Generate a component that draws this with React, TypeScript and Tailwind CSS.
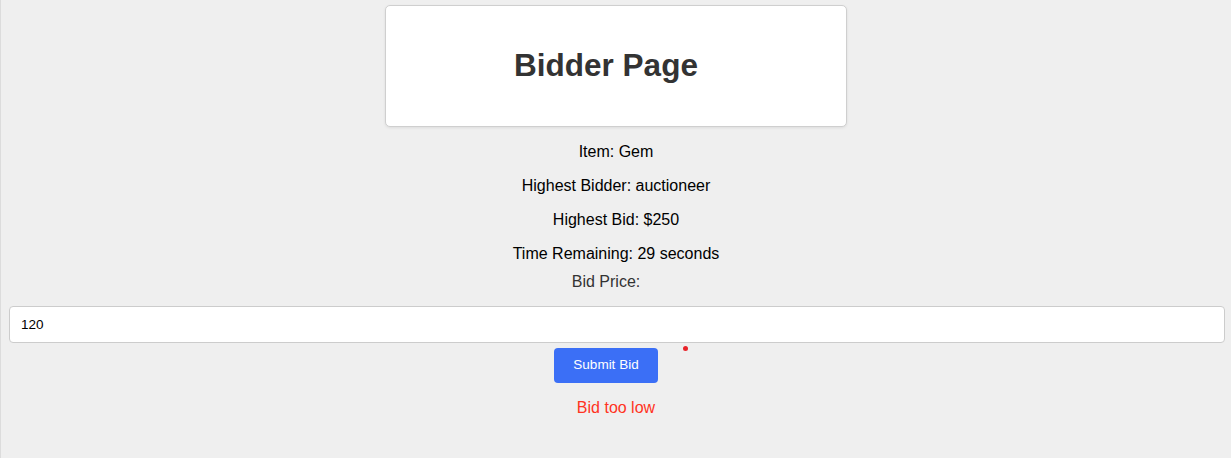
const App = () => {
  return (
    <div
      className="min-h-[458px] bg-[#efefef] border-l border-[#dcdcdc] pt-[5px] px-2 text-center"
      style={{ fontFamily: '"Liberation Sans", Arial, sans-serif' }}
    >
      {/* Header card */}
      <div className="mx-auto w-[462px] h-[122px] bg-white border border-[#cfcfcf] rounded-[5px] shadow-[0_1px_3px_rgba(0,0,0,0.08)] flex items-center justify-center">
        <h1 className="-ml-[20px] -mt-[1px] text-[31.5px] font-bold text-[#333] leading-none">Bidder Page</h1>
      </div>

      {/* Auction info */}
      <div className="text-[16px] text-black leading-[18px]">
        <p className="mt-[16px]">Item: Gem</p>
        <p className="mt-[16px]">Highest Bidder: auctioneer</p>
        <p className="mt-[16px]">Highest Bid: $250</p>
        <p className="mt-[16px]">Time Remaining: 29 seconds</p>
      </div>

      {/* Bid form */}
      <label className="block mt-[10px] pr-[20px] text-[16px] leading-[18px] text-[#333]">Bid Price:</label>
      <input
        type="text"
        defaultValue="120"
        className="block w-[calc(100%+2px)] mt-[15px] h-[37px] px-[11px] bg-white border border-[#cccccc] rounded-[4px] text-[13.5px] text-black outline-none"
      />
      <div className="relative flex justify-center mt-[5px]">
        <button className="-ml-[20px] w-[104px] h-[35px] bg-[#3b6ff6] text-white text-[13.5px] rounded-[4px]">
          Submit Bid
        </button>
        <span className="absolute left-[674px] top-[-2px] w-[5px] h-[5px] rounded-full bg-[#e8232a]" />
      </div>
      <p className="mt-[16px] text-[16px] leading-[18px] text-[#ff3322]">Bid too low</p>
    </div>
  )
}

export default App
